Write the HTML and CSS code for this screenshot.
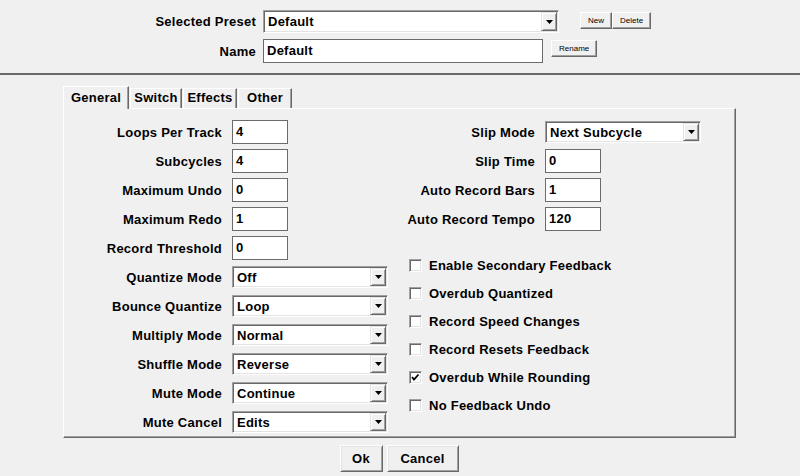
FILE: index.html
```html
<!DOCTYPE html>
<html>
<head>
<meta charset="utf-8">
<link rel="stylesheet" href="styles.css">
</head>
<body>
<div class="dialog">
  <div class="preset-header">
    <div class="field-label">Selected Preset</div>
    <div class="control-row">
      <div class="combo combo-preset">
        <span class="combo-value">Default</span>
        <span class="combo-btn"><svg width="7" height="4" viewBox="0 0 7 4"><polygon points="0,0 7,0 3.5,4" fill="#000"/></svg></span>
      </div>
      <div class="mini-group">
        <button class="mini-btn">New</button><button class="mini-btn">Delete</button>
      </div>
    </div>
    <div class="field-label">Name</div>
    <div class="control-row">
      <div class="textbox textbox-name">Default</div>
      <button class="mini-btn mini-rename">Rename</button>
    </div>
  </div>

  <div class="separator"></div>

  <div class="tabs">
    <div class="tab tab-active tab-general">General</div>
    <div class="tab tab-switch">Switch</div>
    <div class="tab tab-effects">Effects</div>
    <div class="tab tab-other">Other</div>
  </div>

  <div class="panel">
    <div class="form-left">
      <div class="field-label">Loops Per Track</div><div class="textbox textbox-num">4</div>
      <div class="field-label">Subcycles</div><div class="textbox textbox-num">4</div>
      <div class="field-label">Maximum Undo</div><div class="textbox textbox-num">0</div>
      <div class="field-label">Maximum Redo</div><div class="textbox textbox-num">1</div>
      <div class="field-label">Record Threshold</div><div class="textbox textbox-num">0</div>
      <div class="field-label">Quantize Mode</div>
      <div class="combo combo-field"><span class="combo-value">Off</span><span class="combo-btn"><svg width="7" height="4" viewBox="0 0 7 4"><polygon points="0,0 7,0 3.5,4" fill="#000"/></svg></span></div>
      <div class="field-label">Bounce Quantize</div>
      <div class="combo combo-field"><span class="combo-value">Loop</span><span class="combo-btn"><svg width="7" height="4" viewBox="0 0 7 4"><polygon points="0,0 7,0 3.5,4" fill="#000"/></svg></span></div>
      <div class="field-label">Multiply Mode</div>
      <div class="combo combo-field"><span class="combo-value">Normal</span><span class="combo-btn"><svg width="7" height="4" viewBox="0 0 7 4"><polygon points="0,0 7,0 3.5,4" fill="#000"/></svg></span></div>
      <div class="field-label">Shuffle Mode</div>
      <div class="combo combo-field"><span class="combo-value">Reverse</span><span class="combo-btn"><svg width="7" height="4" viewBox="0 0 7 4"><polygon points="0,0 7,0 3.5,4" fill="#000"/></svg></span></div>
      <div class="field-label">Mute Mode</div>
      <div class="combo combo-field"><span class="combo-value">Continue</span><span class="combo-btn"><svg width="7" height="4" viewBox="0 0 7 4"><polygon points="0,0 7,0 3.5,4" fill="#000"/></svg></span></div>
      <div class="field-label">Mute Cancel</div>
      <div class="combo combo-field"><span class="combo-value">Edits</span><span class="combo-btn"><svg width="7" height="4" viewBox="0 0 7 4"><polygon points="0,0 7,0 3.5,4" fill="#000"/></svg></span></div>
    </div>

    <div class="form-right">
      <div class="form-right-grid">
        <div class="field-label">Slip Mode</div>
        <div class="combo combo-field"><span class="combo-value">Next Subcycle</span><span class="combo-btn"><svg width="7" height="4" viewBox="0 0 7 4"><polygon points="0,0 7,0 3.5,4" fill="#000"/></svg></span></div>
        <div class="field-label">Slip Time</div><div class="textbox textbox-num">0</div>
        <div class="field-label">Auto Record Bars</div><div class="textbox textbox-num">1</div>
        <div class="field-label">Auto Record Tempo</div><div class="textbox textbox-num">120</div>
      </div>
      <div class="checks">
        <div class="check"><span class="check-box"></span><span>Enable Secondary Feedback</span></div>
        <div class="check"><span class="check-box"></span><span>Overdub Quantized</span></div>
        <div class="check"><span class="check-box"></span><span>Record Speed Changes</span></div>
        <div class="check"><span class="check-box"></span><span>Record Resets Feedback</span></div>
        <div class="check"><span class="check-box"><svg width="11" height="11" viewBox="0 0 11 11"><polyline points="2,5 4,7.5 8.5,2.5" fill="none" stroke="#000" stroke-width="1.8"/></svg></span><span>Overdub While Rounding</span></div>
        <div class="check"><span class="check-box"></span><span>No Feedback Undo</span></div>
      </div>
    </div>
  </div>

  <div class="actions">
    <button class="btn btn-ok">Ok</button>
    <button class="btn btn-cancel">Cancel</button>
  </div>
</div>
</body>
</html>
```
FILE: styles.css
```css
html, body {
  margin: 0;
  padding: 0;
}
body {
  background: #f0f0f0;
  width: 800px;
  height: 476px;
  overflow: hidden;
  font: bold 13px "Liberation Sans", Arial, sans-serif;
  letter-spacing: 0.25px;
  color: #000;
}
.dialog {
  width: 800px;
  height: 476px;
}

/* header */
.preset-header {
  display: grid;
  grid-template-columns: 256px auto;
  grid-template-rows: 23px 24px;
  column-gap: 7px;
  row-gap: 6px;
  padding-top: 10px;
  align-items: center;
}
.field-label {
  text-align: right;
  white-space: nowrap;
}
.control-row {
  display: flex;
  align-items: center;
  height: 100%;
}
.mini-group {
  display: flex;
  margin-left: 21px;
  align-self: flex-start;
  margin-top: 2px;
}
.mini-btn {
  box-sizing: border-box;
  height: 17px;
  padding: 0 7px;
  margin: 0;
  background: #f0f0f0;
  border: 1px solid;
  border-color: #fff #696969 #696969 #fff;
  box-shadow: inset -1px -1px #a0a0a0;
  font: 8px "Liberation Sans", Arial, sans-serif;
  letter-spacing: 0;
  color: #000;
}
.mini-rename {
  margin-left: 8px;
  align-self: flex-start;
  margin-top: 1px;
}

/* text fields */
.textbox {
  box-sizing: border-box;
  height: 24px;
  background: #fff;
  border: 1px solid #6b6b6b;
  padding: 0 3px;
  line-height: 21px;
  white-space: nowrap;
}
.textbox-name {
  width: 280px;
}
.textbox-num {
  width: 56px;
}

/* combos */
.combo {
  box-sizing: border-box;
  display: flex;
  padding: 1px;
  background: #fff;
  border: 1px solid;
  border-color: #a0a0a0 #fff #fff #a0a0a0;
  box-shadow: inset 1px 1px #696969, inset -1px -1px #e3e3e3;
}
.combo-preset {
  width: 296px;
  height: 23px;
}
.combo-field {
  width: 156px;
  height: 22px;
}
.combo-value {
  flex: 1;
  display: flex;
  align-items: center;
  padding-left: 3px;
  white-space: nowrap;
}
.combo-btn {
  box-sizing: border-box;
  width: 16px;
  display: flex;
  align-items: center;
  justify-content: center;
  background: #f0f0f0;
  border: 1px solid;
  border-color: #e3e3e3 #696969 #696969 #e3e3e3;
  box-shadow: inset 1px 1px #fff, inset -1px -1px #a0a0a0;
}

.separator {
  height: 2px;
  background: #696969;
  margin-top: 10px;
}

/* tabs */
.tabs {
  display: flex;
  align-items: flex-end;
  height: 22px;
  margin-top: 11px;
  margin-left: 63px;
}
.tab {
  box-sizing: border-box;
  height: 20px;
  line-height: 18px;
  text-align: center;
  border: 1px solid;
  border-bottom: none;
  border-color: #fff #696969 transparent #fff;
  box-shadow: inset -1px 0 #a0a0a0;
  background: #f0f0f0;
  margin-left: 1px;
}
.tab-active {
  height: 23px;
  padding-top: 2px;
  margin-bottom: -1px;
  margin-left: 0;
  position: relative;
  z-index: 1;
}
.tab-general { width: 66px; }
.tab-switch { width: 52px; }
.tab-effects { width: 54px; }
.tab-other { width: 54px; }

/* panel */
.panel {
  box-sizing: border-box;
  width: 673px;
  height: 330px;
  margin-left: 63px;
  border: 1px solid;
  border-color: #fff #696969 #696969 #fff;
  box-shadow: inset -1px -1px #a0a0a0;
  padding-top: 11px;
  display: grid;
  grid-template-columns: 324px 1fr;
  column-gap: 21px;
  align-items: start;
}
.form-left {
  display: grid;
  grid-template-columns: 158px 156px;
  grid-auto-rows: 24px;
  column-gap: 10px;
  row-gap: 5px;
  align-items: center;
  justify-items: start;
}
.form-left .field-label,
.form-right-grid .field-label {
  justify-self: end;
}
.form-right-grid {
  display: grid;
  grid-template-columns: 126px 156px;
  grid-auto-rows: 24px;
  column-gap: 10px;
  row-gap: 5px;
  align-items: center;
  justify-items: start;
}
.checks {
  margin-top: 20px;
  display: flex;
  flex-direction: column;
}
.check {
  height: 28px;
  display: flex;
  align-items: center;
  gap: 7px;
  white-space: nowrap;
}
.check-box {
  box-sizing: border-box;
  width: 13px;
  height: 13px;
  background: #fff;
  border: 1px solid;
  border-color: #a0a0a0 #fff #fff #a0a0a0;
  box-shadow: inset 1px 1px #696969, inset -1px -1px #e3e3e3;
  display: flex;
  align-items: center;
  justify-content: center;
}

/* bottom buttons */
.actions {
  display: flex;
  justify-content: center;
  gap: 4px;
  margin-top: 7px;
  padding-right: 2px;
}
.btn {
  box-sizing: border-box;
  height: 27px;
  margin: 0;
  padding: 0;
  background: #f0f0f0;
  border: 1px solid;
  border-color: #fff #696969 #696969 #fff;
  box-shadow: inset 1px 1px #e3e3e3, inset -1px -1px #a0a0a0;
  font: bold 13px "Liberation Sans", Arial, sans-serif;
  letter-spacing: 0.25px;
  color: #000;
}
.btn-ok { width: 43px; }
.btn-cancel { width: 72px; }
```
